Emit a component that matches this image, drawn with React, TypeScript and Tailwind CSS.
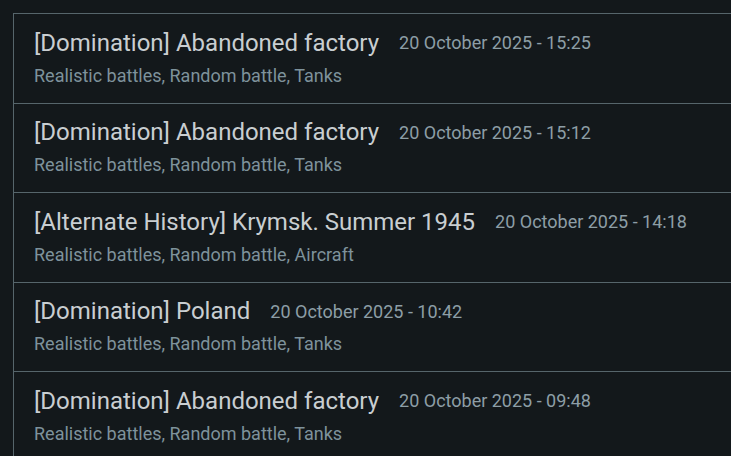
import React from "react";

const rows = [
  { title: "[Domination] Abandoned factory", date: "20 October 2025 - 15:25", sub: "Realistic battles, Random battle, Tanks" },
  { title: "[Domination] Abandoned factory", date: "20 October 2025 - 15:12", sub: "Realistic battles, Random battle, Tanks" },
  { title: "[Alternate History] Krymsk. Summer 1945", date: "20 October 2025 - 14:18", sub: "Realistic battles, Random battle, Aircraft" },
  { title: "[Domination] Poland", date: "20 October 2025 - 10:42", sub: "Realistic battles, Random battle, Tanks" },
  { title: "[Domination] Abandoned factory", date: "20 October 2025 - 09:48", sub: "Realistic battles, Random battle, Tanks" },
];

export default function App() {
  return (
    <div className="w-[731px] h-[456px] overflow-hidden bg-[#13181b] pt-[13px] pl-[13px]" style={{ fontFamily: "Roboto, sans-serif" }}>
      <div className="w-[740px] border-l border-t border-[#56656b]">
        {rows.map((r, i) => (
          <div key={i} className="h-[89.5px] border-b border-[#56656b] pl-5 pt-[14.5px]">
            <div className="flex items-center whitespace-nowrap">
              <span className="text-[24px] leading-[28px] text-[#c9ced1]">{r.title}</span>
              <span className="ml-5 text-[18px] leading-[27px] text-[#8d9ea6]">{r.date}</span>
            </div>
            <div className="mt-[8px] text-[18px] leading-[22px] text-[#7e929b] whitespace-nowrap">{r.sub}</div>
          </div>
        ))}
      </div>
    </div>
  );
}
